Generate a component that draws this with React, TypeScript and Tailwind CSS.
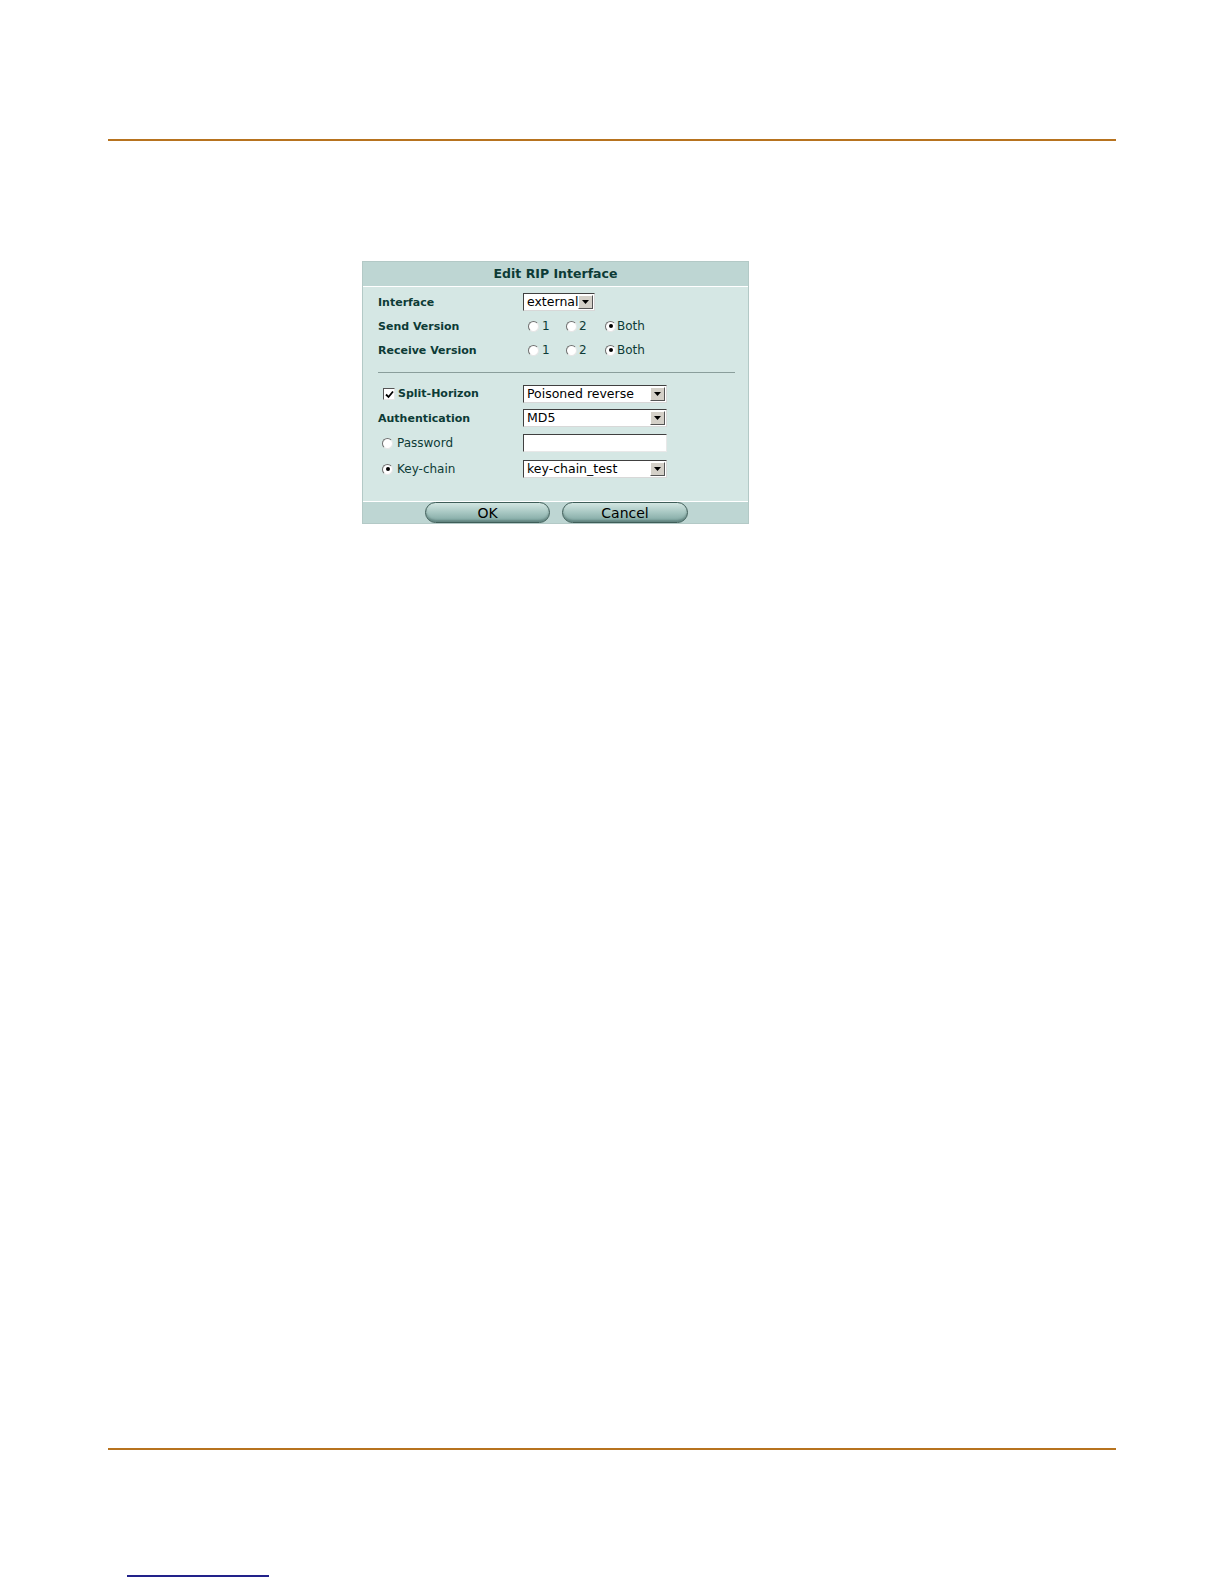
const ink = 'text-[#0d3b36]';
const sans = 'font-["DejaVu_Sans",Verdana,sans-serif]';

function Radio({ checked }: { checked?: boolean }) {
  return (
    <span className="inline-flex h-[11px] w-[11px] shrink-0 items-center justify-center rounded-full border border-[#6f6f6f] border-b-[#e6e6e6] border-r-[#e6e6e6] bg-white">
      {checked && <span className="h-[4px] w-[4px] rounded-full bg-black" />}
    </span>
  );
}

function Check() {
  return (
    <span className="inline-flex h-[12px] w-[12px] shrink-0 items-center justify-center border border-[#555] border-b-[#e6e6e6] border-r-[#e6e6e6] bg-white">
      <svg width="9" height="9" viewBox="0 0 9 9">
        <path d="M1 4.5 L3.5 7 L8 1.5" fill="none" stroke="#000" strokeWidth="1.8" />
      </svg>
    </span>
  );
}

function Select({ value, wide }: { value: string; wide?: boolean }) {
  return (
    <div
      className={`flex h-[18px] items-center border border-[#404040] border-b-[#d8d8d8] border-r-[#d8d8d8] bg-white ${wide ? 'w-[144px]' : 'w-[72px]'}`}
    >
      <span className="flex-1 overflow-hidden whitespace-nowrap pl-[3px] text-[12.5px] leading-[16px] text-black">{value}</span>
      <span className="mr-px flex h-[14px] w-[15px] shrink-0 items-center justify-center border border-white border-b-[#555] border-r-[#555] bg-[#d4d0c8]">
        <svg width="7" height="4" viewBox="0 0 7 4">
          <path d="M0 0 H7 L3.5 4 Z" fill="#000" />
        </svg>
      </span>
    </div>
  );
}

function RadioSet() {
  return (
    <div className="flex items-center pl-[5px] text-[12px]">
      <span className="flex w-[38px] items-center gap-[3px]">
        <Radio /> 1
      </span>
      <span className="flex w-[39px] items-center gap-[2px]">
        <Radio /> 2
      </span>
      <span className="flex items-center gap-[1px]">
        <Radio checked /> Both
      </span>
    </div>
  );
}

function Row({ label, h = 'h-[24px]', children }: { label: React.ReactNode; h?: string; children: React.ReactNode }) {
  return (
    <div className={`flex items-center ${h}`}>
      <div className="w-[145px] shrink-0">{label}</div>
      {children}
    </div>
  );
}

function PillButton({ label, w }: { label: string; w: string }) {
  return (
    <button
      className={`${w} h-[21px] rounded-full border border-[#3e5d58] bg-gradient-to-b from-[#d3e6e2] via-[#a7c7c2] to-[#7ea5a0] text-[14px] leading-none text-black shadow-[inset_0_-2px_2px_rgba(40,70,66,0.35)]`}
    >
      {label}
    </button>
  );
}

export default function App() {
  return (
    <div className={`min-h-[1584px] bg-white ${sans}`}>
      <div className="ml-[108px] w-[1008px] pt-[139px]">
        <div className="h-[2px] bg-[#b7731f]" />

        {/* Edit RIP Interface dialog */}
        <div className={`ml-[254px] mt-[120px] w-[387px] border border-[#b3c9c6] ${ink}`}>
          <div className="flex h-[24px] items-center justify-center bg-[#bed6d3] text-[12.5px] font-bold">
            Edit RIP Interface
          </div>
          <div className="h-px bg-white" />
          <div className="bg-[#d5e7e4] pb-[19px] pl-[15px] pr-[13px] pt-[3px] text-[12px]">
            <Row label={<span className="text-[11px] font-bold">Interface</span>}>
              <Select value="external" />
            </Row>
            <Row label={<span className="text-[11px] font-bold">Send Version</span>}>
              <RadioSet />
            </Row>
            <Row label={<span className="text-[11px] font-bold">Receive Version</span>}>
              <RadioSet />
            </Row>
            <div className="mb-[9px] mt-[10px] h-px bg-[#8a9e9b]" />
            <Row
              label={
                <span className="flex items-center gap-[3px] pl-[5px] text-[11px] font-bold">
                  <Check /> Split-Horizon
                </span>
              }
            >
              <Select value="Poisoned reverse" wide />
            </Row>
            <Row label={<span className="text-[11px] font-bold">Authentication</span>}>
              <Select value="MD5" wide />
            </Row>
            <Row
              h="h-[26px]"
              label={
                <span className="flex items-center gap-[4px] pl-[4px]">
                  <Radio /> Password
                </span>
              }
            >
              <div className="h-[18px] w-[144px] border border-[#404040] border-b-[#e8e8e8] border-r-[#e8e8e8] bg-white" />
            </Row>
            <Row
              h="h-[26px]"
              label={
                <span className="flex items-center gap-[4px] pl-[4px]">
                  <Radio checked /> Key-chain
                </span>
              }
            >
              <Select value="key-chain_test" wide />
            </Row>
          </div>
          <div className="h-px bg-white" />
          <div className="flex h-[21px] items-center justify-center gap-[12px] bg-[#bed6d3] pl-[2px]">
            <PillButton label="OK" w="w-[125px]" />
            <PillButton label="Cancel" w="w-[126px]" />
          </div>
        </div>

        <div className="mt-[924px] h-[2px] bg-[#b7731f]" />
        <div className="ml-[19px] mt-[125px] h-[2px] w-[142px] bg-[#22228a]" />
      </div>
    </div>
  );
}
